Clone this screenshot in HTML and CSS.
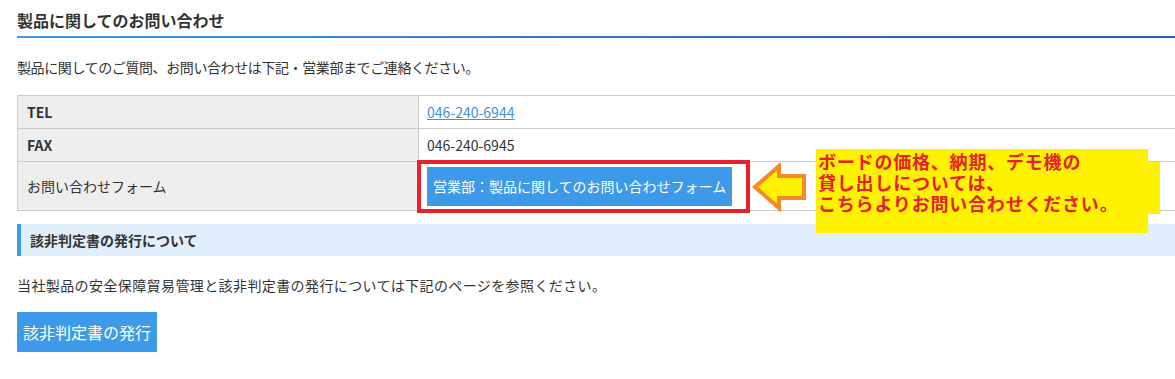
FILE: index.html
```html
<!DOCTYPE html>
<html lang="ja">
<head>
    <meta charset="UTF-8">
    <meta name="viewport" content="width=device-width, initial-scale=1.0">
    <title>製品に関してのお問い合わせ</title>
    <link rel="stylesheet" href="styles.css">
</head>
<body>
    <div class="page">
        <h2 class="title">製品に関してのお問い合わせ</h2>
        <p class="lead">製品に関してのご質問、お問い合わせは下記・営業部までご連絡ください。</p>
        <table class="contact">
            <tr>
                <th>TEL</th>
                <td><a href="#">046-240-6944</a></td>
            </tr>
            <tr>
                <th>FAX</th>
                <td>046-240-6945</td>
            </tr>
            <tr class="form-row">
                <th class="plain">お問い合わせフォーム</th>
                <td><a class="btn btn-form" href="#">営業部：製品に関してのお問い合わせフォーム</a></td>
            </tr>
        </table>

        <h3 class="sub">該非判定書の発行について</h3>
        <p class="lead lead-2">当社製品の安全保障貿易管理と該非判定書の発行については下記のページを参照ください。</p>
        <a class="btn btn-issue" href="#">該非判定書の発行</a>

        <!-- annotation layer -->
        <div class="mark-box"></div>
        <svg class="mark-arrow" width="62" height="52" viewBox="0 0 62 52">
            <polygon points="5,24 29,3 29,13 54,13 54,35 29,35 29,45" fill="#fff200" stroke="#f7882a" stroke-width="4" stroke-linejoin="miter"/>
        </svg>
        <div class="note-tab"></div>
        <div class="note">ボードの価格、納期、デモ機の<br>貸し出しについては、<br>こちらよりお問い合わせください。</div>
    </div>
</body>
</html>
```

FILE: styles.css
```css
body {
    margin: 0;
    overflow: hidden;
    font-family: "Noto Sans CJK JP", "Noto Sans", sans-serif;
    color: #333;
    background-color: #fff;
}

.page {
    position: relative;
    margin-left: 17px;
    width: 1200px;
}

.title {
    margin: 0;
    padding: 8px 0 4px;
    font-size: 16px;
    line-height: 24px;
    font-weight: bold;
    border-bottom: 2px solid #3a97e6;
    border-image: linear-gradient(to right, #3b9ae9, #2a5fb3 960px, #2a5fb3) 1;
}

.lead {
    margin: 19px 0 18px;
    font-size: 14px;
    line-height: 20px;
    letter-spacing: -0.4px;
}

.contact {
    width: 100%;
    border-collapse: collapse;
    font-size: 14px;
}

.contact th,
.contact td {
    border: 1px solid #ccc;
    height: 32px;
    padding: 0 8px;
    text-align: left;
    line-height: 20px;
}

.contact th {
    width: 383px;
    padding-left: 9px;
    background-color: #eee;
    font-weight: bold;
}

.contact th.plain {
    font-weight: normal;
}

.contact td a {
    color: #3d8fe3;
}

.form-row td {
    height: 48px;
    padding-top: 0;
    padding-bottom: 0;
}

.btn {
    display: inline-block;
    background-color: #3c9ae8;
    color: #fff;
    text-decoration: none;
}

.contact td a.btn-form {
    color: #fff;
    text-decoration: none;
    height: 39px;
    line-height: 39px;
    padding: 0 6px;
    font-size: 14px;
}

.sub {
    margin: 13px 0 0;
    height: 32px;
    line-height: 32px;
    padding-left: 9px;
    border-left: 4px solid #3c9ae8;
    background-color: #e1effc;
    font-size: 14px;
    font-weight: bold;
}

.lead-2 {
    margin: 19px 0 17px;
    letter-spacing: 0.4px;
}

.btn-issue {
    height: 40px;
    line-height: 40px;
    padding: 0 6px;
    font-size: 16px;
}

.mark-box {
    position: absolute;
    left: 400px;
    top: 160px;
    width: 325px;
    height: 45px;
    border: 4px solid #e8202a;
}

.mark-arrow {
    position: absolute;
    left: 733px;
    top: 163px;
}

.note {
    position: absolute;
    left: 799px;
    top: 149px;
    width: 330px;
    height: 82px;
    padding: 2px 0 0 2px;
    background-color: #fff200;
    color: #e8202a;
    font-size: 18px;
    line-height: 21px;
    font-weight: bold;
    letter-spacing: 0.8px;
}

.note-tab {
    position: absolute;
    left: 1125px;
    top: 162px;
    width: 18px;
    height: 52px;
    background-color: #fff200;
}
```
